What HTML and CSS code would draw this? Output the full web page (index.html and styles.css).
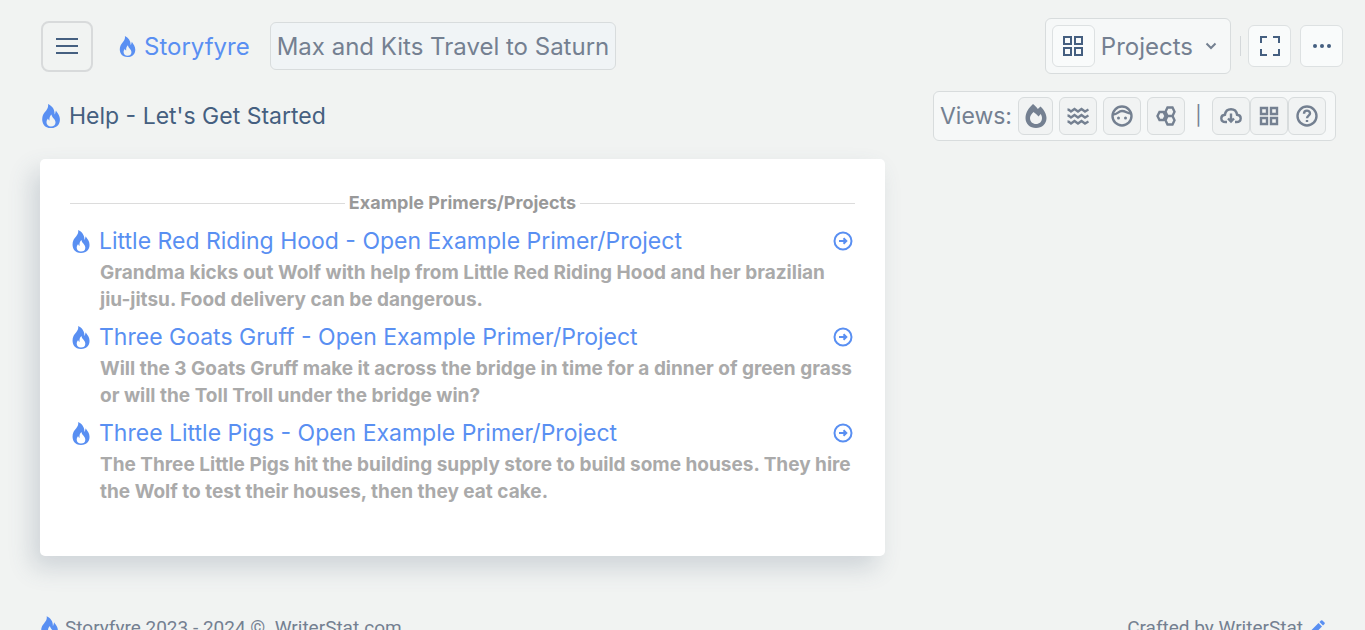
FILE: index.html
```
<!DOCTYPE html>
<html lang="en">
<head>
    <meta charset="utf-8">
    <title>Storyfyre - Help</title>
    <meta name="viewport" content="width=device-width, initial-scale=1.0">
    <link rel="stylesheet" href="styles.css">
</head>
<body>
    <!-- shared flame symbol -->
    <svg class="symbols" aria-hidden="true">
        <symbol id="flame" viewBox="0 0 18 24">
            <path fill-rule="evenodd" d="M6 0C7 5 2.500 7.500 1 11C-.8 15 -.2 24 9 24C18 24 19.500 15.500 16.500 10.500C15.500 8.500 14.500 8 14 6.500C13.300 8 13.500 9.500 12.500 10.500C13 6 10.500 2 6 0ZM9.500 10.500C10 14 13.500 15 13.500 18.500C13.500 21.200 11.500 22.500 9 22.500C6.400 22.500 4.500 21 4.500 18.300C4.500 16.500 5.400 15.500 6 14.500C6.300 15.700 6.800 16.200 7.500 16.500C7.300 14 7.700 12 9.500 10.500Z"/>
        </symbol>
        <symbol id="arrow" viewBox="0 0 20 20">
            <circle cx="10" cy="10" r="8.500"/>
            <path d="M6 10h7M10.500 7.200L13.300 10l-2.800 2.800"/>
        </symbol>
    </svg>

    <header class="topbar">
        <button class="menu-btn" aria-label="Menu">
            <svg width="22" height="18" viewBox="0 0 22 18"><path d="M0 2h22M0 9h22M0 16h22"/></svg>
        </button>
        <a class="brand" href="#"><svg class="flame" width="17" height="21"><use href="#flame"/></svg>Storyfyre</a>
        <button class="story-title">Max and Kits Travel to Saturn</button>
        <div class="topbar-right">
            <button class="projects">
                <span class="square">
                    <svg width="22" height="22" viewBox="0 0 22 22"><path d="M2 2h7v7H2zM13 2h7v7h-7zM2 13h7v7H2zM13 13h7v7h-7z"/></svg>
                </span>
                Projects
                <svg class="chevron" width="12" height="8" viewBox="0 0 12 8"><path d="M1.500 1.500L6 6l4.500-4.500"/></svg>
            </button>
            <span class="divider"></span>
            <button class="square" aria-label="Full screen">
                <svg width="22" height="22" viewBox="0 0 22 22"><path d="M2 8V2h6M14 2h6v6M20 14v6h-6M8 20H2v-6"/></svg>
            </button>
            <button class="square more" aria-label="More">
                <svg width="20" height="6" viewBox="0 0 20 6"><circle cx="3" cy="3" r="2"/><circle cx="10" cy="3" r="2"/><circle cx="17" cy="3" r="2"/></svg>
            </button>
        </div>
    </header>

    <div class="subbar">
        <h1><svg class="flame" width="18" height="24"><use href="#flame"/></svg>Help - Let's Get Started</h1>
        <div class="views">
            <span class="views-label">Views:</span>
            <div class="view-group">
                <button class="view active" aria-label="Fire">
                    <svg class="solid" width="22" height="24" viewBox="0 0 22 24"><path fill-rule="evenodd" d="M8 0C9.500 1.200 11.500 3 12.800 5L15.500 2.500C19 5.500 21.500 10 21.500 14C21.500 20 17 24 11 24C5 24 .5 20 .5 14C.5 8.500 4 3.500 8 0ZM8.500 8C6.500 10 5 11.800 5 14C5 17.700 7.700 20 11 20C14.500 20 17 17.700 17 14C17 12.700 16.500 11.200 15.700 10L13.500 12.500C12.200 10.700 10 9.200 8.500 8Z"/></svg>
                </button>
                <button class="view" aria-label="Waves">
                    <svg width="22" height="18" viewBox="0 0 22 18"><path d="M.5 2.500Q2 2.500 4 4.500L7.500 2L11 4.500L14.500 2L18 4.500L21.500 2.500M.5 8.500Q2 8.500 4 10.500L7.500 8L11 10.500L14.500 8L18 10.500L21.500 8.500M.5 14.500Q2 14.500 4 16.500L7.500 14L11 16.500L14.500 14L18 16.500L21.500 14.500"/></svg>
                </button>
                <button class="view" aria-label="Characters">
                    <svg width="22" height="22" viewBox="0 0 22 22"><circle cx="11" cy="11" r="9.500"/><path d="M2 9.500c5 0 5-3.500 9-3.500s5 2.500 9 2.500"/><path class="dots" d="M7.500 13h0M14.500 13h0"/></svg>
                </button>
                <button class="view" aria-label="Structure">
                    <svg width="20" height="20" viewBox="0 0 20 20"><path d="M3.500 6h4l2 4-2 4h-4l-2-4zM11.500 1.500h5l2 4.200-2 4.300h-5l-2-4.300zM11.500 10h5l2 4.300-2 4.200h-5l-2-4.200z"/></svg>
                </button>
            </div>
            <span class="bar">|</span>
            <div class="tool-group">
                <button class="view" aria-label="Download">
                    <svg width="22" height="18" viewBox="0 0 22 18"><path d="M7 15H5.500C0 15 0 8 5 7.700C6 .5 16 .5 17 7.700C22 8 22 15 16.500 15H15M11 6.500V14M8 11.500L11 14.500L14 11.500"/></svg>
                </button>
                <button class="view" aria-label="Grid">
                    <svg width="20" height="20" viewBox="0 0 20 20"><path d="M2 2h6v6H2zM12 2h6v6h-6zM2 12h6v6H2zM12 12h6v6h-6z"/></svg>
                </button>
                <button class="view" aria-label="Help">
                    <svg width="22" height="22" viewBox="0 0 22 22"><circle cx="11" cy="11" r="9.500"/><path d="M8 8.800C8 4.500 14 4.700 14 8.500C14 10.500 11 10.800 11 13.200M11 15v2"/></svg>
                </button>
            </div>
        </div>
    </div>

    <main class="card">
        <h2 class="rule-title">Example Primers/Projects</h2>

        <div class="item">
            <a class="item-link" href="#">
                <svg class="flame" width="18" height="23"><use href="#flame"/></svg>
                <span>Little Red Riding Hood - Open Example Primer/Project</span>
                <svg class="arrow" width="20" height="20"><use href="#arrow"/></svg>
            </a>
            <p>Grandma kicks out Wolf with help from Little Red Riding Hood and her brazilian jiu-jitsu. Food delivery can be dangerous.</p>
        </div>

        <div class="item">
            <a class="item-link" href="#">
                <svg class="flame" width="18" height="23"><use href="#flame"/></svg>
                <span>Three Goats Gruff - Open Example Primer/Project</span>
                <svg class="arrow" width="20" height="20"><use href="#arrow"/></svg>
            </a>
            <p>Will the 3 Goats Gruff make it across the bridge in time for a dinner of green grass or will the Toll Troll under the bridge win?</p>
        </div>

        <div class="item">
            <a class="item-link" href="#">
                <svg class="flame" width="18" height="23"><use href="#flame"/></svg>
                <span>Three Little Pigs - Open Example Primer/Project</span>
                <svg class="arrow" width="20" height="20"><use href="#arrow"/></svg>
            </a>
            <p>The Three Little Pigs hit the building supply store to build some houses. They hire the Wolf to test their houses, then they eat cake.</p>
        </div>
    </main>

    <footer>
        <div class="footer-side"><svg class="flame" width="17" height="23"><use href="#flame"/></svg>Storyfyre 2023 - 2024 ©&nbsp; WriterStat.com</div>
        <div class="footer-side">Crafted by WriterStat <svg class="pencil" width="15" height="15" viewBox="0 0 15 15"><path d="M0 15V11.500L8.500 3L12 6.500L3.500 15ZM9.500 2L11 .5Q11.700-.2 12.400.5L14.500 2.600Q15.200 3.300 14.500 4L13 5.500Z"/></svg></div>
    </footer>
</body>
</html>
```
FILE: styles.css
```
body {
    margin: 0;
    background: #f1f3f2;
    font-family: Inter, "Liberation Sans", sans-serif;
    font-size: 19px;
    color: #748091;
}
button {
    padding: 0;
    border: 1px solid #d8dcdd;
    border-radius: 6px;
    background: #f6f8f8;
    font-family: inherit;
    font-size: 24px;
    color: #748091;
    cursor: pointer;
}
a {
    color: #598ff2;
    text-decoration: none;
}
svg {
    flex: none;
    fill: none;
    stroke: currentColor;
    stroke-width: 2;
}
.symbols {
    position: absolute;
    width: 0;
    height: 0;
}
.flame, .pencil {
    fill: #598ff2;
    stroke: none;
}
.topbar {
    display: flex;
    align-items: center;
    padding: 18px 22px 0 41px;
}
.menu-btn {
    display: flex;
    align-items: center;
    justify-content: center;
    width: 52px;
    height: 51px;
    border: 2px solid #d8dadb;
    border-radius: 8px;
    background: none;
    color: #455f80;
}
.brand {
    display: flex;
    align-items: center;
    gap: 8px;
    margin: 0 20px 0 26px;
    font-size: 24px;
}
.story-title {
    height: 48px;
    padding: 0 6px;
    background: #f0f4f6;
}
.topbar-right {
    display: flex;
    align-items: center;
    margin-left: auto;
}
.projects {
    display: flex;
    align-items: center;
    gap: 6px;
    height: 56px;
    padding: 0 13px 0 6px;
}
.square {
    display: flex;
    align-items: center;
    justify-content: center;
    box-sizing: border-box;
    width: 43px;
    height: 42px;
    border: 1px solid #dde1e2;
    border-radius: 6px;
    background: #f9fbfb;
    color: #455f80;
}
.chevron {
    margin-left: 6px;
}
.divider {
    width: 1px;
    height: 20px;
    margin: 0 7px 0 9px;
    background: #d4d8da;
}
.more {
    margin-left: 9px;
}
.more svg {
    fill: currentColor;
    stroke: none;
}
.subbar {
    display: flex;
    align-items: center;
    justify-content: space-between;
    padding: 17px 29px 0 42px;
}
h1 {
    display: flex;
    align-items: center;
    gap: 9px;
    margin: 0;
    font-size: 23px;
    font-weight: 400;
    line-height: 36px;
    color: #455f80;
}
.views {
    display: flex;
    align-items: center;
    box-sizing: border-box;
    height: 50px;
    padding: 0 9px 0 6px;
    border: 1px solid #d8dcdd;
    border-radius: 6px;
    background: #f6f8f8;
    font-size: 23px;
    line-height: 36px;
}
.view-group {
    display: flex;
    gap: 6px;
    margin-left: 6px;
}
.tool-group {
    display: flex;
}
.view {
    display: flex;
    align-items: center;
    justify-content: center;
    width: 38px;
    height: 38px;
    background: #f1f3f3;
}
.view svg {
    stroke-width: 2.4;
}
.view.active {
    width: 35px;
}
.view .solid {
    fill: currentColor;
    stroke: none;
}
.view .dots {
    stroke-width: 3;
    stroke-linecap: round;
}
.bar {
    width: 27px;
    font-size: 19px;
    text-align: center;
}
.card {
    box-sizing: border-box;
    max-width: 845px;
    margin: 18px 40px 0;
    padding: 30px 30px 51px;
    border-radius: 5px;
    background: #fff;
    box-shadow: -8px 12px 24px rgba(69, 88, 115, 0.2);
}
.rule-title {
    display: flex;
    align-items: center;
    gap: 4px;
    margin: 0 0 6px;
    font-size: 18px;
    line-height: 28px;
    color: #999;
}
.rule-title::before,
.rule-title::after {
    content: "";
    flex: 1;
    height: 1px;
    background: #dcdcdc;
}
.item {
    margin-bottom: 6px;
}
.item:last-child {
    margin-bottom: 0;
}
.item-link {
    display: flex;
    align-items: center;
    gap: 9px;
    padding: 0 2px;
    font-size: 23px;
    line-height: 36px;
}
.arrow {
    margin-left: auto;
}
.item p {
    margin: 0 0 0 30px;
    font-weight: bold;
    line-height: 27px;
    color: #aaa;
}
footer {
    display: flex;
    justify-content: space-between;
    padding: 58px 40px 20px 41px;
    font-family: Roboto, sans-serif;
    line-height: 27px;
}
.footer-side {
    display: flex;
    align-items: center;
    gap: 7px;
}
```
